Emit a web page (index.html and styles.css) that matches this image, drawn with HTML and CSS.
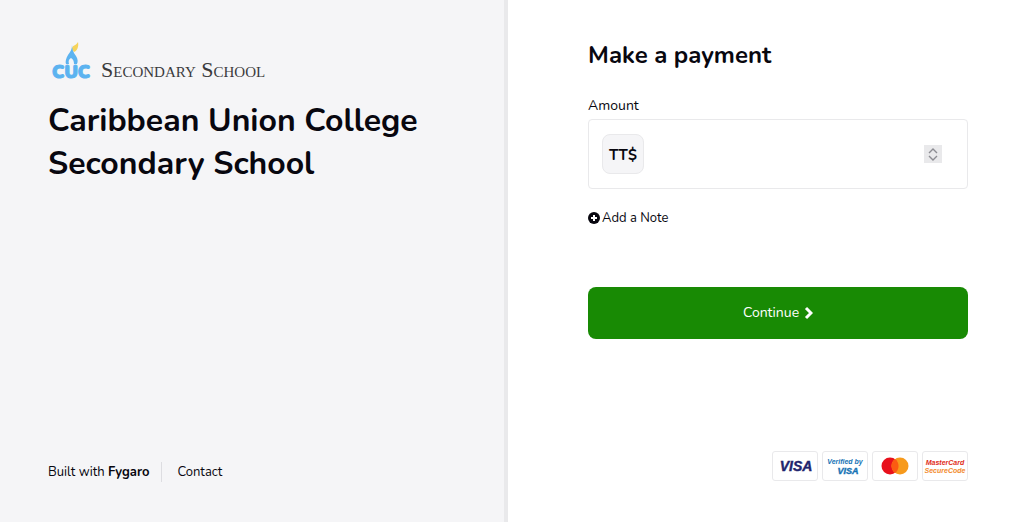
FILE: index.html
```html
<!DOCTYPE html>
<html lang="en">
<head>
    <meta charset="utf-8">
    <meta name="viewport" content="width=device-width, initial-scale=1">
    <title>Caribbean Union College Secondary School</title>
    <link rel="stylesheet" href="styles.css">
</head>
<body>
    <div class="checkout">
        <section class="merchant">
            <div>
                <svg class="logo" width="224" height="46" viewBox="0 0 224 46" role="img" aria-label="CUC Secondary School">
                    <path d="M24 9 C24 5 28 6 30 2 C31 7 29 11 26 12 Z" fill="#f6d35b"/>
                    <path d="M24 5 C24 9 25 12 28 16 C30 19 30 22 29 24 L26 24 C26 21 25 19 23 18 C21 19 20 21 21 24 L18 24 C17 22 18 18 20 15 C23 11 24 9 24 5 Z" fill="#5cb3f0"/>
                    <text class="logo-mark" x="4" y="38">CUC</text>
                    <text class="logo-name" x="53" y="37">Secondary School</text>
                </svg>
                <h1 class="merchant-name">Caribbean Union College Secondary School</h1>
            </div>
            <footer class="links">
                <a href="#">Built with <b>Fygaro</b></a>
                <a href="#" class="contact">Contact</a>
            </footer>
        </section>

        <main class="payment">
            <form>
                <h2 class="title">Make a payment</h2>
                <label class="label" for="amount">Amount</label>
                <div class="amount-box">
                    <span class="currency">TT$</span>
                    <input class="amount" type="number" id="amount" min="0" step="0.01">
                    <div class="stepper">
                        <button type="button" id="up" aria-label="Increase">
                            <svg width="10" height="6" viewBox="0 0 10 6"><path d="M1 5 L5 1 L9 5"/></svg>
                        </button>
                        <button type="button" id="down" aria-label="Decrease">
                            <svg width="10" height="6" viewBox="0 0 10 6"><path d="M1 1 L5 5 L9 1"/></svg>
                        </button>
                    </div>
                </div>
                <button type="button" class="add-note">
                    <svg width="12" height="12" viewBox="0 0 12 12"><circle cx="6" cy="6" r="6" fill="#08070f"/><path d="M6 3 V9 M3 6 H9" stroke="#fff" stroke-width="2"/></svg>
                    Add a Note
                </button>
                <button type="submit" class="continue">
                    Continue
                    <svg width="9" height="14" viewBox="0 0 9 14"><path d="M2 2 L7 7 L2 12" fill="none" stroke="#fff" stroke-width="3"/></svg>
                </button>
            </form>

            <div class="cards">
                <svg class="card" viewBox="0 0 44 28" role="img" aria-label="Visa">
                    <text class="visa" x="23" y="19" font-size="14">VISA</text>
                </svg>
                <svg class="card" viewBox="0 0 44 28" role="img" aria-label="Verified by Visa">
                    <text class="verified" x="22" y="12">Verified by</text>
                    <text class="visa visa-light" x="25" y="22" font-size="9">VISA</text>
                </svg>
                <svg class="card" viewBox="0 0 44 28" role="img" aria-label="Mastercard">
                    <circle cx="17" cy="14" r="8.5" fill="#e8101c"/>
                    <circle cx="27" cy="14" r="8.5" fill="#f79a1c"/>
                    <path d="M22 7.1 A8.5 8.5 0 0 1 22 20.9 A8.5 8.5 0 0 1 22 7.1 Z" fill="#fb5b12"/>
                </svg>
                <svg class="card" viewBox="0 0 44 28" role="img" aria-label="MasterCard SecureCode">
                    <text class="mc" x="22" y="13">MasterCard</text>
                    <text class="mc secure" x="22" y="21">SecureCode</text>
                </svg>
            </div>
        </main>
    </div>

    <script>
        const amount = document.getElementById('amount');
        document.getElementById('up').onclick = () => amount.stepUp(100);
        document.getElementById('down').onclick = () => amount.stepDown(100);
    </script>
</body>
</html>
```
FILE: styles.css
```css
* {
    box-sizing: border-box;
}

body {
    margin: 0;
    background: #fff;
    color: #08070f;
    font-family: Nunito, Lato, sans-serif;
    font-size: 14px;
    line-height: 20px;
}

button {
    padding: 0;
    border: none;
    background: none;
    color: inherit;
    font: inherit;
    cursor: pointer;
}

.checkout {
    display: grid;
    grid-template-columns: 54fr 56fr;
    min-height: 100vh;
}

.merchant,
.payment {
    display: flex;
    flex-direction: column;
    justify-content: space-between;
    padding: 40px 48px;
}

.merchant {
    background: #f5f5f7;
    border-right: 4px solid #e9e9eb;
}

.payment {
    padding: 40px 67px 41px 80px;
}

.logo {
    display: block;
}

.logo-mark {
    fill: #5cb3f0;
    stroke: #5cb3f0;
    font: 900 18px Nunito, sans-serif;
}

.logo-name {
    fill: #3b3b3d;
    font: 22px "Liberation Serif", serif;
    font-variant: small-caps;
}

.merchant-name {
    margin: 13px 0 0;
    font-size: 32px;
    font-weight: bold;
    line-height: 43px;
}

.links {
    display: flex;
    font-size: 13px;
}

.links a {
    color: inherit;
    text-decoration: none;
}

.contact {
    margin-left: 12px;
    padding-left: 15px;
    border-left: 1px solid #dddde1;
}

.title {
    margin: 0 0 26px;
    font-size: 24px;
    line-height: 30px;
}

.label {
    display: block;
    margin-bottom: 3px;
}

.amount-box {
    display: flex;
    align-items: center;
    height: 70px;
    padding: 0 25px 0 13px;
    border: 1px solid #e9e9eb;
    border-radius: 4px;
}

.currency {
    padding: 10px 6px 8px;
    border: 1px solid #e9e9eb;
    border-radius: 8px;
    background: #f5f5f7;
    font-size: 15px;
    font-weight: bold;
}

.amount {
    flex: 1;
    min-width: 0;
    height: 40px;
    padding: 0 12px;
    border: none;
    outline: none;
    font: inherit;
    appearance: textfield;
}

.stepper {
    display: grid;
    width: 18px;
    height: 18px;
    padding: 2px 0;
    background: #e9e9eb;
}

.stepper button {
    display: flex;
    justify-content: center;
    align-items: center;
}

.stepper path {
    fill: none;
    stroke: #8c8c92;
    stroke-width: 1.4;
}

.add-note {
    display: flex;
    align-items: center;
    gap: 2px;
    margin: 19px 0 59px;
    font-size: 13px;
}

.continue {
    display: flex;
    justify-content: center;
    align-items: center;
    gap: 5px;
    width: 100%;
    height: 52px;
    border-radius: 8px;
    background: #188a04;
    color: #fff;
}

.cards {
    display: flex;
    justify-content: flex-end;
    gap: 4px;
}

.card {
    width: 46px;
    height: 30px;
    border: 1px solid #e9e9eb;
    border-radius: 3px;
    background: #fff;
    text-anchor: middle;
}

.visa {
    fill: #21246d;
    stroke: #21246d;
    stroke-width: 0.4;
    font-family: "Liberation Sans", sans-serif;
    font-weight: bold;
    font-style: italic;
}

.visa-light {
    fill: #1673b5;
    stroke: #1673b5;
}

.verified {
    fill: #1673b5;
    font: italic bold 7px "Liberation Sans", sans-serif;
}

.mc {
    fill: #df2c20;
    font: italic bold 7px "Liberation Sans", sans-serif;
}

.secure {
    fill: #f28a2e;
}
```
